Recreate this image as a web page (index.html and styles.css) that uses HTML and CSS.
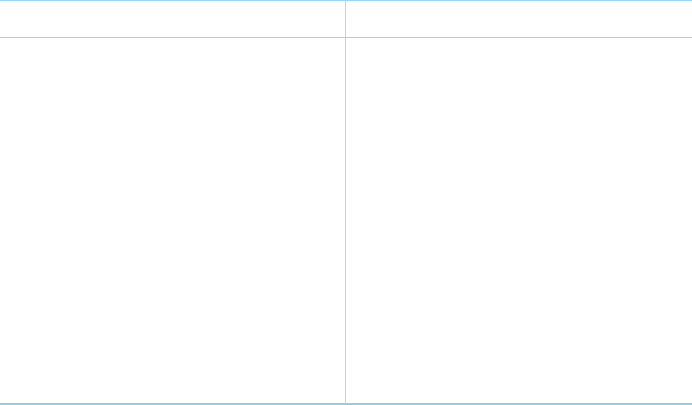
FILE: index.html
```html
<!DOCTYPE html>
<html lang="en">
<head>
    <meta charset="UTF-8">
    <title>Table</title>
    <link rel="stylesheet" href="styles.css">
</head>
<body>
    <table class="grid">
        <thead>
            <tr>
                <th></th>
                <th></th>
            </tr>
        </thead>
        <tbody>
            <tr>
                <td></td>
                <td></td>
            </tr>
        </tbody>
    </table>
</body>
</html>
```
FILE: styles.css
```css
body {
    margin: 0;
    padding: 0;
    background: #fff;
    font: 14px/20px "Liberation Sans", Arial, sans-serif;
}
.grid {
    width: 692px;
    border-collapse: collapse;
    table-layout: fixed;
}
.grid th,
.grid td {
    padding: 0;
    border-left: 1px solid #a9dcf1;
}
.grid th:first-child,
.grid td:first-child {
    border-left: 0;
    width: 345px;
}
.grid th {
    height: 36px;
    border-top: 1px solid #9dd5ef;
    border-bottom: 1px solid #9dd5ef;
}
.grid td {
    height: 365px;
    border-bottom: 2px solid #8ecfea;
}
```
